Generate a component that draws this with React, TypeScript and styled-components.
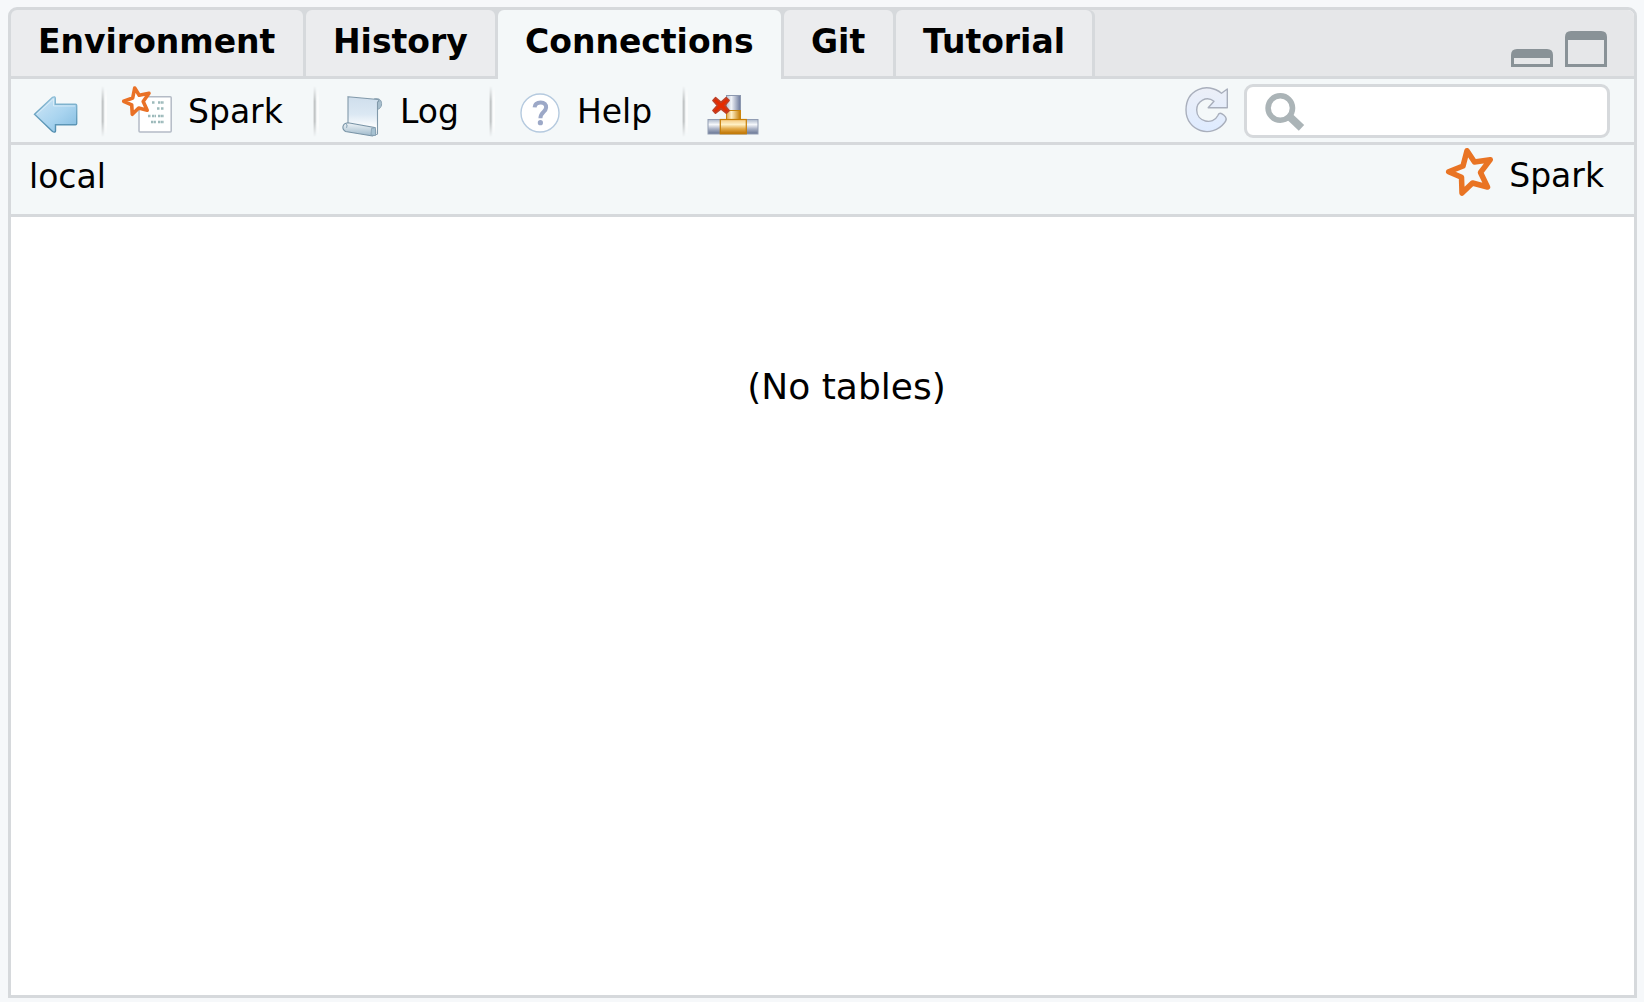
import React from "react";
import styled, { createGlobalStyle } from "styled-components";

const line = "#d6d9dc";
const surface = "#f4f8f9";

const GlobalStyle = createGlobalStyle`
  * { box-sizing: border-box; }
  body {
    margin: 0;
    background: #f6f8fa;
    font-family: "DejaVu Sans", sans-serif;
    font-size: 33px;
    color: #000;
  }
`;

const Page = styled.div`
  height: 1002px;
  padding: 7px 7px 4px 8px;
`;

const Pane = styled.main`
  display: flex;
  flex-direction: column;
  height: 991px;
  width: 1629px;
  border: 3px solid ${line};
  border-radius: 9px 9px 0 0;
  background: #fff;
`;

const TabStrip = styled.div`
  display: flex;
  height: 69px;
  flex: none;
  background: #e6e7e9;
  border-radius: 6px 6px 0 0;
`;

const Tab = styled.div<{ $width: number; $last?: boolean }>`
  display: flex;
  flex: none;
  width: ${(p) => p.$width}px;
  padding-right: 3px;
  border-radius: ${(p) => (p.$last ? "0 6px 0 0" : "0")};
  background: ${line};
`;

const TabFace = styled.div<{ $active?: boolean }>`
  flex: 1;
  height: ${(p) => (p.$active ? 69 : 66)}px;
  padding-left: 27px;
  border-radius: 6px 6px 0 0;
  background: ${(p) => (p.$active ? surface : "#ebecee")};
  font-weight: bold;
  line-height: 63px;
  white-space: nowrap;
`;

const StripEnd = styled.div`
  display: flex;
  flex: 1;
  align-items: flex-end;
  justify-content: flex-end;
  gap: 12px;
  padding: 0 27px 9px 0;
  border-bottom: 3px solid ${line};
`;

const Toolbar = styled.div`
  display: flex;
  flex: none;
  height: 66px;
  padding: 0 24px 0 22px;
  border-bottom: 3px solid ${line};
  background: ${surface};
`;

const Divider = styled.div`
  flex: none;
  width: 6px;
  height: 51px;
  margin-top: 7px;
  background: linear-gradient(90deg, #dfe2e3 0 1px, #c1c5c6 1px 2px, #d0d3d4 2px 3px, #eef1f2 3px 4px, #fbfcfc 4px 6px);
  mask-image: linear-gradient(transparent, #000 30%, #000 70%, transparent);
`;

const Tool = styled.div<{ $before: number; $width: number; $gap?: number }>`
  display: flex;
  flex: none;
  gap: ${(p) => p.$gap ?? 0}px;
  width: ${(p) => p.$width}px;
  margin-left: ${(p) => p.$before}px;
  line-height: 65px;
`;

const Art = styled.svg`
  display: block;
  flex: none;
`;

const Spacer = styled.div`
  flex: 1;
`;

const Search = styled.label`
  display: flex;
  flex: none;
  width: 366px;
  height: 54px;
  margin: 5px 0 0 14px;
  padding-left: 18px;
  border: 3px solid ${line};
  border-radius: 9px;
  background: #fff;
`;

const SearchInput = styled.input`
  flex: 1;
  min-width: 0;
  border: 0;
  outline: 0;
  background: transparent;
  font: inherit;
`;

const ConnectionRow = styled.div`
  display: flex;
  flex: none;
  justify-content: space-between;
  height: 72px;
  padding: 0 30px 0 18px;
  border-bottom: 3px solid ${line};
  background: ${surface};
  line-height: 63px;
`;

const Kind = styled.div`
  display: flex;
  gap: 14px;
  line-height: 62px;
`;

const Empty = styled.div`
  flex: 1;
  padding: 136px 0 0 48px;
  text-align: center;
  font-size: 36px;
  line-height: 67px;
`;

const tabs = [
  { name: "Environment", width: 295 },
  { name: "History", width: 192 },
  { name: "Connections", width: 286, active: true },
  { name: "Git", width: 112 },
  { name: "Tutorial", width: 199 },
];

const BackIcon = () => (
  <Art width="46" height="63" viewBox="33 79 46 63">
    <defs>
      <linearGradient id="back" x1="0" y1="0" x2="1" y2="1">
        <stop offset="0" stopColor="#d0e7f6" />
        <stop offset=".55" stopColor="#a9d4ef" />
        <stop offset="1" stopColor="#83bce0" />
      </linearGradient>
      <linearGradient id="backEdge" x1="0" y1="0" x2="0" y2="1">
        <stop offset="0" stopColor="#8cbdd6" />
        <stop offset="1" stopColor="#4e8bad" />
      </linearGradient>
    </defs>
    <path d="M34.5 114.3L52.5 97.3Q55.3 96 55.3 98.5V104.3H75.5Q76.7 104.3 76.7 105.5V123.5Q76.7 124.7 75.5 124.7H55.5V131Q55 133 52.5 131.5Z" fill="url(#back)" stroke="url(#backEdge)" strokeWidth="1.4" />
    <path d="M37 114L53.5 99V106H75" fill="none" stroke="#e2f1fa" strokeWidth="1" opacity=".7" />
  </Art>
);

const SparkDocIcon = () => (
  <Art width="54" height="63" viewBox="121 79 54 63">
    <rect x="139" y="96.7" width="32.2" height="35.3" rx="1" fill="#fff" stroke="#b4bbc6" strokeWidth="1.5" />
    <g fill="none" stroke="#9dbabb" strokeWidth="2.6" strokeDasharray="2.2 .5">
      <path d="M152 102.5H155M158 102.5H164M157 108.5H160M161 108.5H164M148 116H151M152 116H156M158 116H164M151 122H156M158 122H164" />
    </g>
    <path d="M134.7 88L139.2 95.3L149 93.3L143.2 101.5L147.2 110.3L138.7 108L132.3 114.3L131.7 104.8L123.7 101.3L132.7 98Z" fill="#fff" stroke="#e97126" strokeWidth="3.6" strokeLinejoin="round" />
  </Art>
);

const LogIcon = () => (
  <Art width="44" height="63" viewBox="341 79 44 63">
    <defs>
      <linearGradient id="paper" x1="0" y1="0" x2="0" y2="1">
        <stop offset="0" stopColor="#cfdeec" />
        <stop offset=".45" stopColor="#dbe8f3" />
        <stop offset=".8" stopColor="#fff" />
      </linearGradient>
      <linearGradient id="roll" x1="0" y1="0" x2="0" y2="1">
        <stop offset="0" stopColor="#f0f5f8" />
        <stop offset="1" stopColor="#9db8ca" />
      </linearGradient>
    </defs>
    <path d="M374 99C380 97.5 382 101 381.5 105C380.8 108.5 378 110.3 374 109Z" fill="#a8bfce" stroke="#8ba3b3" strokeWidth="1" />
    <path d="M348 96.7L378 99.5Q380 101 377.5 102V134L374 135.5L348 130Z" fill="url(#paper)" stroke="#8199aa" strokeWidth="1.1" />
    <path d="M348 122.7L374.5 127.5Q378 134 372.5 136L345.5 131.5C341.5 129 342 123.5 348 122.7Z" fill="url(#roll)" stroke="#7994a6" strokeWidth="1.1" />
    <path d="M346 123.5Q348.2 125 346.5 128M371.5 128.5L375.5 127.5V135.5L371 135Z" fill="#a6c1d1" stroke="#7f9bad" strokeWidth=".7" />
  </Art>
);

const HelpIcon = () => (
  <Art width="42" height="63" viewBox="519 79 42 63">
    <circle cx="540" cy="113" r="19" fill="#fff" stroke="#b5cadf" strokeWidth="1.4" />
    <path d="M534.6 107.4C535 103.4 537.700 102.600 540.700 102.600C544.500 102.600 546.300 104.800 546.100 107.500C545.800 112.300 540.400 111.800 540.400 118.300" fill="none" stroke="#9ca8c7" strokeWidth="4" />
    <circle cx="540.4" cy="122.7" r="2.6" fill="#9ca8c7" />
  </Art>
);

const DisconnectIcon = () => (
  <Art width="56" height="63" viewBox="706 79 56 63">
    <defs>
      <linearGradient id="steelH" x1="0" y1="0" x2="1" y2="0">
        <stop offset="0" stopColor="#bcc5d4" />
        <stop offset=".35" stopColor="#f0f3f8" />
        <stop offset="1" stopColor="#69779a" />
      </linearGradient>
      <linearGradient id="steelV" x1="0" y1="0" x2="0" y2="1">
        <stop offset="0" stopColor="#acb8ca" />
        <stop offset=".35" stopColor="#f6f8fb" />
        <stop offset=".65" stopColor="#a8b1c5" />
        <stop offset="1" stopColor="#667493" />
      </linearGradient>
      <linearGradient id="goldH" x1="0" y1="0" x2="1" y2="0">
        <stop offset="0" stopColor="#dfa44a" />
        <stop offset=".35" stopColor="#fff0c8" />
        <stop offset="1" stopColor="#c37900" />
      </linearGradient>
      <linearGradient id="goldV" x1="0" y1="0" x2="0" y2="1">
        <stop offset="0" stopColor="#f3c87e" />
        <stop offset=".35" stopColor="#fff0c4" />
        <stop offset=".65" stopColor="#e3aa48" />
        <stop offset="1" stopColor="#bd7100" />
      </linearGradient>
    </defs>
    <rect x="726.5" y="95.5" width="14" height="16" fill="url(#steelH)" stroke="#8c98af" />
    <rect x="726.5" y="110.5" width="14" height="10" fill="url(#goldH)" stroke="#c98510" />
    <rect x="708" y="119.5" width="50" height="14.5" fill="url(#steelV)" stroke="#929db3" />
    <rect x="720.3" y="119.5" width="26" height="14.3" fill="url(#goldV)" stroke="#c77e06" strokeWidth="1.2" />
    <path d="M715.5 97.8L721 102.4L726.3 97.8L729 100.5L724.7 105.5L729 110.5L726.3 113.1L721 108.7L715.5 113.1L713 110.5L717.4 105.5L713 100.5Z" fill="#e62b00" stroke="#bf4026" strokeWidth="1.8" strokeLinejoin="round" />
  </Art>
);

const RefreshIcon = () => (
  <Art width="46" height="63" viewBox="1184 79 46 63">
    <defs>
      <linearGradient id="refresh" x1="0" y1="0" x2="0" y2="1">
        <stop offset="0" stopColor="#eceff7" />
        <stop offset="1" stopColor="#deebff" />
      </linearGradient>
    </defs>
    <path d="M1227.300 89V107.800H1208.200L1214 101.200C1206.500 95.300 1196.700 101 1196.700 110C1196.700 122 1213 125.500 1217.700 115.700C1219 112.200 1221 113 1224 115.200C1227 117.700 1226.700 120 1224.700 122.500C1211.500 139.500 1186 131 1186 110C1186 89.500 1207 81.500 1221.500 93.200Z" fill="url(#refresh)" stroke="#a9afbc" strokeWidth="1.4" strokeLinejoin="round" />
  </Art>
);

const SearchIcon = () => (
  <Art width="40" height="48" viewBox="1265 87 40 48">
    <circle cx="1280.3" cy="108" r="12.2" fill="none" stroke="#abb4b7" strokeWidth="5.6" />
    <path d="M1288.800 115.800L1301.500 127.800" stroke="#abb4b7" strokeWidth="7.8" />
  </Art>
);

const SparkIcon = () => (
  <Art width="50" height="69" viewBox="1445 145 50 69">
    <path d="M1467 150.7L1474.500 162L1490.300 159.700L1480.500 172.500L1487.500 187L1472.500 183L1462 193L1461.500 177.200L1448.700 171.700L1463 166Z" fill="none" stroke="#e97424" strokeWidth="5.5" strokeLinejoin="round" />
  </Art>
);

const WindowIcon = ({ height }: { height: number }) => (
  <Art width="42" height={height} viewBox={`0 0 42 ${height}`}>
    <path
      fillRule="evenodd"
      fill="#899297"
      d={`M0 ${height}V6Q0 0 6 0H36Q42 0 42 6V${height}ZM3 9V${height - 3}H39V9Z`}
    />
  </Art>
);

export default function App() {
  return (
    <>
      <GlobalStyle />
      <Page>
        <Pane>
          <TabStrip>
            {tabs.map((t, i) => (
              <Tab key={t.name} $width={t.width} $last={i === tabs.length - 1}>
                <TabFace $active={t.active}>{t.name}</TabFace>
              </Tab>
            ))}
            <StripEnd>
              <WindowIcon height={18} />
              <WindowIcon height={36} />
            </StripEnd>
          </TabStrip>
          <Toolbar>
            <Tool $before={0} $width={68}><BackIcon /></Tool>
            <Divider />
            <Tool $before={14} $width={192} $gap={13}><SparkDocIcon />Spark</Tool>
            <Divider />
            <Tool $before={22} $width={148} $gap={15}><LogIcon />Log</Tool>
            <Divider />
            <Tool $before={24} $width={163} $gap={16}><HelpIcon />Help</Tool>
            <Divider />
            <Tool $before={18} $width={56}><DisconnectIcon /></Tool>
            <Spacer />
            <RefreshIcon />
            <Search>
              <SearchIcon />
              <SearchInput aria-label="Search" />
            </Search>
          </Toolbar>
          <ConnectionRow>
            <span>local</span>
            <Kind><SparkIcon />Spark</Kind>
          </ConnectionRow>
          <Empty>(No tables)</Empty>
        </Pane>
      </Page>
    </>
  );
}
